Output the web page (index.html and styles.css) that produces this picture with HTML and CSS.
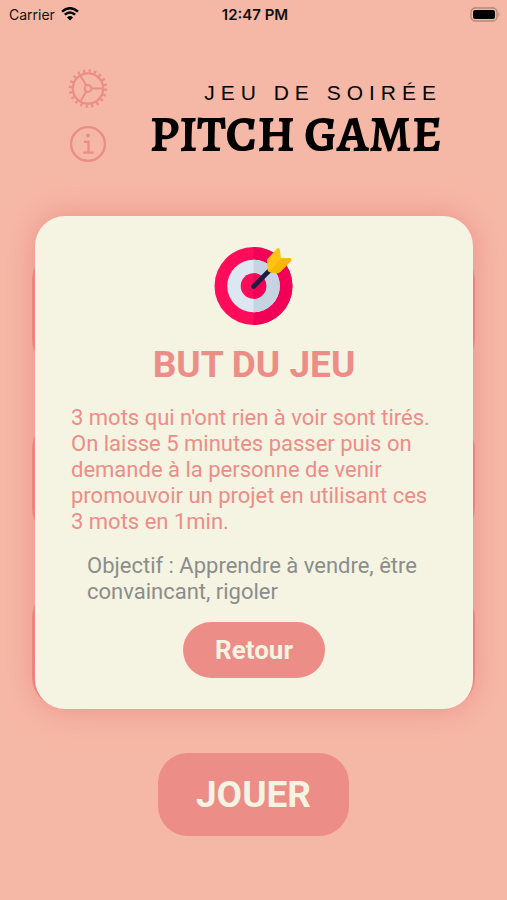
FILE: index.html
```html
<!DOCTYPE html>
<html lang="fr">
<head>
    <meta charset="utf-8">
    <meta name="viewport" content="width=device-width, initial-scale=1">
    <title>Pitch Game</title>
    <link rel="stylesheet" href="styles.css">
</head>
<body>
    <div class="status-bar">
        <div class="carrier">
            <span>Carrier</span>
            <svg width="18" height="14" viewBox="0 0 18 14">
                <path d="M1 4.6 Q9 -2.2 17 4.6" fill="none" stroke="#000" stroke-width="2.4"/>
                <path d="M3.8 7.7 Q9 3.2 14.2 7.7" fill="none" stroke="#000" stroke-width="2.4"/>
                <path d="M6 10.4 Q9 7.8 12 10.4 L9 13.6 Z" fill="#000"/>
            </svg>
        </div>
        <div class="time">12:47 PM</div>
        <div class="battery">
            <svg width="31" height="15" viewBox="0 0 31 15">
                <rect x="1" y="1" width="26" height="13" rx="4" fill="none" stroke="#b48779" stroke-width="1.3"/>
                <rect x="3" y="3" width="22" height="9" rx="2" fill="#000"/>
                <path d="M28.5 5 Q30.5 7.5 28.5 10 Z" fill="#b48779"/>
            </svg>
        </div>
    </div>

    <header class="header">
        <div class="tools">
            <button class="tool" aria-label="Réglages">
                <svg width="40" height="40" viewBox="0 0 40 40" fill="none" stroke="#ec8d87">
                    <circle cx="20" cy="20.5" r="17.6" stroke-width="3.4" stroke-dasharray="2.2 3.33"/>
                    <circle cx="20" cy="20.5" r="15.2" stroke-width="2.2"/>
                    <circle cx="20" cy="20.5" r="3.4" stroke-width="2"/>
                    <path d="M23.4 20.5 H35 M18.3 17.5 L12.4 7.5 M18.3 23.5 L12.4 33.5" stroke-width="2"/>
                </svg>
            </button>
            <button class="tool" aria-label="Informations">
                <svg width="40" height="40" viewBox="0 0 40 40" fill="none" stroke="#ec8d87">
                    <circle cx="20" cy="20" r="16.9" stroke-width="2.4"/>
                    <circle cx="20" cy="11.5" r="2" fill="#ec8d87" stroke="none"/>
                    <path d="M16 17.8 H20.5 V28.6 M15.2 28.6 H25.6" stroke-width="2.4"/>
                </svg>
            </button>
        </div>
        <div class="brand">
            <p class="tagline">JEU DE SOIRÉE</p>
            <h1 class="title">PITCH GAME</h1>
        </div>
    </header>

    <main class="stage">
        <!-- game modes, hidden behind the rules -->
        <div class="modes">
            <div class="mode"></div>
            <div class="mode"></div>
            <div class="mode"></div>
        </div>

        <section class="rules" role="dialog" aria-labelledby="rules-title">
            <svg class="target" width="80" height="80" viewBox="0 0 80 80">
                <circle cx="39.5" cy="40" r="39" fill="#ff0c5b"/>
                <path d="M39.5 1 A39 39 0 0 1 39.5 79 Z" fill="#f20057"/>
                <circle cx="39.5" cy="40" r="26.3" fill="#dce7f1"/>
                <path d="M39.5 13.7 A26.3 26.3 0 0 1 39.5 66.3 Z" fill="#c6d4e1"/>
                <circle cx="39.5" cy="40" r="12.8" fill="#ff0c5b"/>
                <path d="M39.5 27.2 A12.8 12.8 0 0 1 39.5 52.8 Z" fill="#f20057"/>
                <path d="M39.5 40.5 L58 22" stroke="#1d1c43" stroke-width="4.6" stroke-linecap="round"/>
                <path d="M53 13.5 L63 2.5 Q65.5 1 66 4.5 L67 12.5 L75.5 12 Q78.5 12.5 76.5 15.5 L66 26 Q64.5 27.5 62 27 L55 26 Q53.5 25 53.4 23 Z" fill="#ffc414"/>
                <path d="M67 12.5 L75.5 12 Q78.5 12.5 76.5 15.5 L66 26 Q64.5 27.5 62 27 L55 26 Z" fill="#fab700"/>
            </svg>
            <h2 class="rules-title" id="rules-title">BUT DU JEU</h2>
            <p class="rules-text">3 mots qui n'ont rien à voir sont tirés. On laisse 5 minutes passer puis on demande à la personne de venir promouvoir un projet en utilisant ces 3 mots en 1min.</p>
            <p class="rules-goal">Objectif : Apprendre à vendre, être convaincant, rigoler</p>
            <button class="back">Retour</button>
        </section>
    </main>

    <button class="play">JOUER</button>
</body>
</html>
```
FILE: styles.css
```css
* {
    box-sizing: border-box;
}
body {
    margin: 0;
    min-height: 100vh;
    display: flex;
    flex-direction: column;
    background-color: #f6b8a6;
    font-family: Roboto, sans-serif;
}
h1, h2, p {
    margin: 0;
}
button {
    border: none;
    cursor: pointer;
    font-family: inherit;
    font-weight: bold;
    color: #f5f3e2;
    background-color: #ec8d87;
}
.status-bar {
    display: grid;
    grid-template-columns: 1fr auto 1fr;
    align-items: center;
    height: 28px;
    padding: 0 6px 0 9px;
    font-family: Inter, sans-serif;
    font-size: 14px;
    color: #111;
}
.carrier {
    display: flex;
    align-items: center;
    gap: 6px;
}
.time {
    font-size: 15px;
    font-weight: 600;
}
.battery {
    display: flex;
    justify-content: flex-end;
}
.battery svg {
    display: block;
}
.header {
    display: flex;
    justify-content: space-between;
    padding: 40px 65px 0 68px;
}
.tools {
    display: flex;
    flex-direction: column;
    gap: 16px;
}
.tool {
    padding: 0;
    width: 40px;
    height: 40px;
    background: none;
}
.tool svg {
    display: block;
}
.brand {
    padding-top: 11px;
    text-align: right;
    color: #000;
}
.tagline {
    font-family: "Liberation Sans", Arial, sans-serif;
    font-size: 21px;
    line-height: 28px;
    letter-spacing: 6px;
}
.title {
    font-family: Alegreya, "Liberation Serif", serif;
    font-size: 51px;
    line-height: 54px;
    font-weight: bold;
    white-space: nowrap;
}
.stage {
    position: relative;
    margin: 52px 32px 0;
}
.modes {
    position: absolute;
    top: 34px;
    left: 0;
    right: 0;
    display: flex;
    flex-direction: column;
    gap: 50px;
}
.mode {
    height: 119px;
    border-radius: 30px;
    background-color: #ec8d87;
}
.rules {
    position: relative;
    display: flex;
    flex-direction: column;
    align-items: center;
    margin: 0 2px 0 3px;
    padding: 30px 36px 31px;
    border-radius: 30px;
    background-color: #f5f3e2;
    box-shadow: 0 0 30px rgba(230, 115, 115, 0.6);
}
.rules-title {
    margin-top: 17px;
    font-size: 37px;
    line-height: 44px;
    color: #ec8d87;
}
.rules-text, .rules-goal {
    align-self: stretch;
    font-size: 22px;
    line-height: 26px;
}
.rules-text {
    margin-top: 18px;
    color: #ec8d87;
}
.rules-goal {
    margin-top: 18px;
    padding: 0 16px;
    color: #8b8d8b;
}
.back {
    margin-top: 17px;
    padding: 0 32px;
    height: 56px;
    border-radius: 28px;
    font-size: 26px;
}
.play {
    align-self: center;
    margin-top: 44px;
    padding: 0 38px;
    height: 83px;
    border-radius: 30px;
    font-size: 37px;
}
```
